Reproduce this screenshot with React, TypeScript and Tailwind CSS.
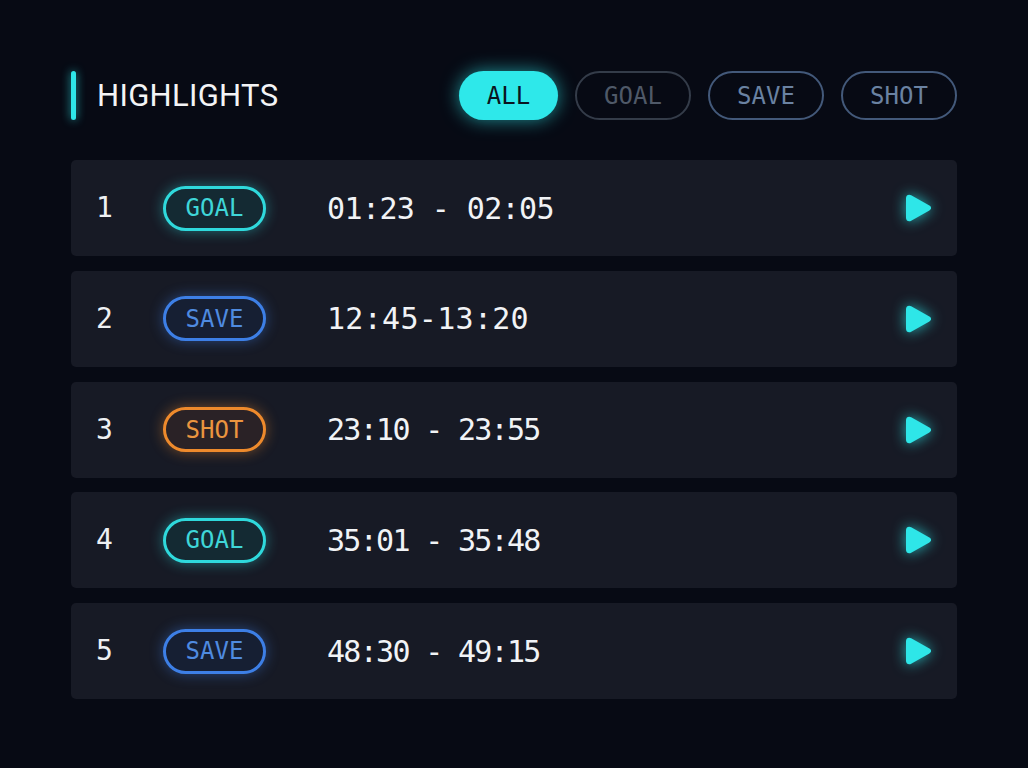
import React from "react";

type Kind = "GOAL" | "SAVE" | "SHOT";

const rows: { n: number; kind: Kind; time: string; track: string }[] = [
  { n: 1, kind: "GOAL", time: "01:23 - 02:05", track: "tracking-[-0.6px]" },
  { n: 2, kind: "SAVE", time: "12:45-13:20", track: "tracking-[0.3px]" },
  { n: 3, kind: "SHOT", time: "23:10 - 23:55", track: "tracking-[-1.7px]" },
  { n: 4, kind: "GOAL", time: "35:01 - 35:48", track: "tracking-[-1.7px]" },
  { n: 5, kind: "SAVE", time: "48:30 - 49:15", track: "tracking-[-1.7px]" },
];

const badgeStyle: Record<Kind, string> = {
  GOAL: "border-[#2fd9dc] text-[#3fd6d8] bg-[#142a33] shadow-[0_0_14px_rgba(45,217,220,0.45)]",
  SAVE: "border-[#3d7fe6] text-[#4f8be0] bg-[#161f33] shadow-[0_0_14px_rgba(61,127,230,0.45)]",
  SHOT: "border-[#ee8a2c] text-[#eb953f] bg-[#2a2226] shadow-[0_0_14px_rgba(238,138,44,0.45)]",
};

const mono = "font-['DejaVu_Sans_Mono','Liberation_Mono',monospace]";

function PlayIcon() {
  return (
    <svg
      width="30"
      height="32"
      viewBox="0 0 30 32"
      className="drop-shadow-[0_0_7px_rgba(45,232,234,0.75)]"
    >
      <path
        d="M3 6 C3 3.2 5.8 1.9 8.2 3.3 L26.4 13.6 C28.6 14.9 28.6 17.1 26.4 18.4 L8.2 28.7 C5.8 30.1 3 28.8 3 26 Z"
        fill="#2ee6e8"
      />
    </svg>
  );
}

export default function App() {
  return (
    <div className="min-h-[768px] w-full bg-[#070a14] font-['Roboto','Noto_Sans',sans-serif]">
      <div className="flex flex-col pl-[71px] pt-[71px] w-[957px]">
        {/* header with filter pills */}
        <div className="flex items-center h-[49px]">
          <div className="w-[5px] h-[49px] rounded-full bg-[#2ee6e8] shadow-[0_0_10px_rgba(46,230,232,0.7)]" />
          <h1 className="ml-[21px] text-[31px] leading-none text-[#f3f4f6] tracking-[0.3px]">
            HIGHLIGHTS
          </h1>
          <div className={`ml-auto flex gap-[17px] ${mono} text-[24px]`}>
            <button className="w-[99px] h-[49px] rounded-full bg-[#2ee8ea] text-[#0a1420] shadow-[0_0_18px_rgba(46,232,234,0.6)]">
              ALL
            </button>
            <button className="w-[116px] h-[49px] rounded-full border-2 border-[#343c49] text-[#4f5968]">
              GOAL
            </button>
            <button className="w-[116px] h-[49px] rounded-full border-2 border-[#43597a] text-[#6a82a2]">
              SAVE
            </button>
            <button className="w-[116px] h-[49px] rounded-full border-2 border-[#43597a] text-[#6a82a2]">
              SHOT
            </button>
          </div>
        </div>

        {/* highlight rows */}
        <div className="mt-[40px] flex flex-col gap-[14.75px]">
          {rows.map((r) => (
            <div
              key={r.n}
              className="h-[96px] rounded-[5px] bg-[#171a25] flex items-center pl-[25px] pr-[24px]"
            >
              <span className={`w-[67px] ${mono} text-[28px] text-[#eef0f3]`}>{r.n}</span>
              <span
                className={`w-[103px] h-[45px] rounded-full border-[3px] flex items-center justify-center ${mono} text-[24px] ${badgeStyle[r.kind]}`}
              >
                {r.kind}
              </span>
              <span
                className={`ml-[61px] ${mono} text-[30px] text-[#f1f3f6] whitespace-pre ${r.track}`}
              >
                {r.time}
              </span>
              <span className="ml-auto flex items-center">
                <PlayIcon />
              </span>
            </div>
          ))}
        </div>
      </div>
    </div>
  );
}
